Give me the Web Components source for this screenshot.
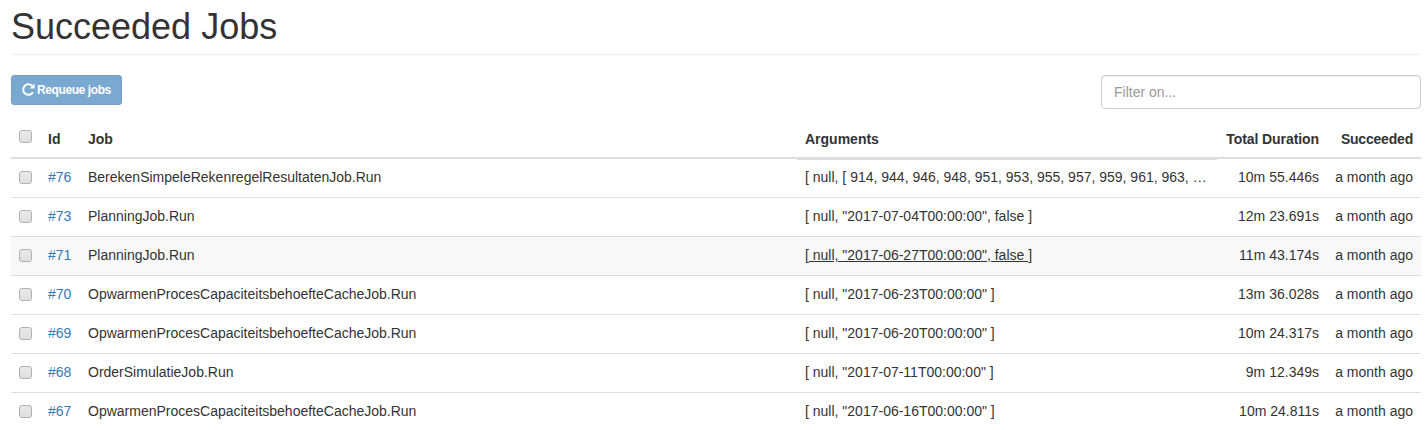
<!DOCTYPE html>
<html>
<head>
<meta charset="utf-8">
<title>Succeeded Jobs</title>
<style>
    html, body { margin: 0; background: #fff; }
    body {
        font-family: "Liberation Sans", Arial, sans-serif;
        font-size: 14px;
        color: #333;
        overflow: hidden;
    }
</style>
</head>
<body>
<jobs-page>
    <page-header>Succeeded Jobs</page-header>
    <jobs-toolbar></jobs-toolbar>
    <jobs-table>
        <job-row job-id="76" job="BerekenSimpeleRekenregelResultatenJob.Run" args="[ null, [ 914, 944, 946, 948, 951, 953, 955, 957, 959, 961, 963, …" duration="10m 55.446s"></job-row>
        <job-row job-id="73" job="PlanningJob.Run" args='[ null, "2017-07-04T00:00:00", false ]' duration="12m 23.691s"></job-row>
        <job-row job-id="71" job="PlanningJob.Run" args='[ null, "2017-06-27T00:00:00", false ]' duration="11m 43.174s" hovered></job-row>
        <job-row job-id="70" job="OpwarmenProcesCapaciteitsbehoefteCacheJob.Run" args='[ null, "2017-06-23T00:00:00" ]' duration="13m 36.028s"></job-row>
        <job-row job-id="69" job="OpwarmenProcesCapaciteitsbehoefteCacheJob.Run" args='[ null, "2017-06-20T00:00:00" ]' duration="10m 24.317s"></job-row>
        <job-row job-id="68" job="OrderSimulatieJob.Run" args='[ null, "2017-07-11T00:00:00" ]' duration="9m 12.349s"></job-row>
        <job-row job-id="67" job="OpwarmenProcesCapaciteitsbehoefteCacheJob.Run" args='[ null, "2017-06-16T00:00:00" ]' duration="10m 24.811s"></job-row>
    </jobs-table>
</jobs-page>

<script>
const COLUMNS = '29px 40px 717px 420px 110px 94px';
const CHECKBOX_CSS = `
    input {
        appearance: none;
        display: block;
        width: 13px;
        height: 13px;
        margin: 0;
        box-sizing: border-box;
        background: linear-gradient(#e9e9e9, #dfdfdf);
        border: 1px solid #b0b0b0;
        border-radius: 3px;
    }
`;

class JobsPage extends HTMLElement {
    constructor() {
        super();
        this.attachShadow({ mode: 'open' });
        this.shadowRoot.innerHTML = `
            <style>
                :host {
                    display: block;
                    padding: 0 6px 0 11px;
                }
            </style>
            <slot></slot>
        `;
    }
}

class PageHeader extends HTMLElement {
    constructor() {
        super();
        this.attachShadow({ mode: 'open' });
        this.shadowRoot.innerHTML = `
            <style>
                :host {
                    display: block;
                    height: 54px;
                    box-sizing: content-box;
                    border-bottom: 1px solid #eee;
                }
                h1 {
                    margin: 0;
                    padding-top: 7px;
                    font-size: 36px;
                    font-weight: 500;
                    line-height: 40px;
                    color: #333;
                }
            </style>
            <h1><slot></slot></h1>
        `;
    }
}

class JobsToolbar extends HTMLElement {
    constructor() {
        super();
        this.attachShadow({ mode: 'open' });
        this.shadowRoot.innerHTML = `
            <style>
                :host {
                    display: flex;
                    justify-content: space-between;
                    align-items: flex-start;
                    padding-top: 20px;
                    height: 45px;
                }
                button {
                    display: flex;
                    align-items: center;
                    gap: 2px;
                    height: 30px;
                    width: 111px;
                    box-sizing: border-box;
                    padding: 0 10px;
                    font: bold 12px "Liberation Sans", Arial, sans-serif;
                    letter-spacing: -.4px;
                    color: #fff;
                    background: #337ab7;
                    border: 1px solid #2e6da4;
                    border-radius: 3px;
                    opacity: .65;
                    white-space: nowrap;
                }
                svg { width: 13px; height: 13px; flex: none; position: relative; top: -1px; }
                input {
                    width: 320px;
                    height: 34px;
                    box-sizing: border-box;
                    padding: 6px 12px;
                    font: 14px "Liberation Sans", Arial, sans-serif;
                    color: #555;
                    border: 1px solid #ccc;
                    border-radius: 4px;
                    box-shadow: inset 0 1px 1px rgba(0,0,0,.075);
                    outline: none;
                }
                input::placeholder { color: #999; opacity: 1; }
            </style>
            <button type="button">
                <svg viewBox="0 0 13 13" fill="none" stroke="#fff" stroke-width="2">
                    <path d="M10.9 9.2A5.2 5.2 0 1 1 10.2 3"></path>
                    <path d="M12.6 .4v5H7.6z" fill="#fff" stroke="none"></path>
                </svg>
                <span>Requeue jobs</span>
            </button>
            <input type="text" placeholder="Filter on...">
        `;
    }
}

class JobsTable extends HTMLElement {
    constructor() {
        super();
        this.attachShadow({ mode: 'open' });
        this.shadowRoot.innerHTML = `
            <style>
                ${CHECKBOX_CSS}
                :host { display: block; }
                .head {
                    display: grid;
                    grid-template-columns: ${COLUMNS};
                    height: 37px;
                    border-bottom: 2px solid #ddd;
                    font-weight: bold;
                    line-height: 20px;
                }
                .head > div { padding: 9px 8px 0; min-width: 0; white-space: nowrap; }
                .head > .check { padding-top: 10px; }
                .args { position: relative; }
                .args::after {
                    content: '';
                    position: absolute;
                    left: 0;
                    right: 0;
                    bottom: -3px;
                    height: 3px;
                    background: #ddd;
                }
                .num { text-align: right; }
                .duration { letter-spacing: -.08px; }
                .succeeded { letter-spacing: -.2px; }
            </style>
            <div class="head">
                <div class="check"><input type="checkbox"></div>
                <div>Id</div>
                <div>Job</div>
                <div class="args">Arguments</div>
                <div class="num duration">Total Duration</div>
                <div class="num succeeded">Succeeded</div>
            </div>
            <slot></slot>
        `;
    }
}

class JobRow extends HTMLElement {
    constructor() {
        super();
        this.attachShadow({ mode: 'open' });
    }

    connectedCallback() {
        const id = this.getAttribute('job-id');
        const job = this.getAttribute('job');
        const args = this.getAttribute('args');
        const duration = this.getAttribute('duration');

        this.shadowRoot.innerHTML = `
            <style>
                ${CHECKBOX_CSS}
                :host {
                    display: grid;
                    grid-template-columns: ${COLUMNS};
                    height: 38px;
                    border-bottom: 1px solid #ddd;
                    line-height: 20px;
                    align-items: center;
                    padding-bottom: 0;
                }
                :host([hovered]) { background: #f8f8f8; }
                :host([hovered]) .args { text-decoration: underline; }
                .cell {
                    padding: 0 8px 2px;
                    min-width: 0;
                    white-space: nowrap;
                    overflow: hidden;
                }
                .num { text-align: right; }
                a { color: #337ab7; text-decoration: none; }
            </style>
            <div class="cell"><input type="checkbox"></div>
            <div class="cell"><a href="#">#${id}</a></div>
            <div class="cell">${job}</div>
            <div class="cell args">${args}</div>
            <div class="cell num">${duration}</div>
            <div class="cell num">a month ago</div>
        `;
    }
}

customElements.define('jobs-page', JobsPage);
customElements.define('page-header', PageHeader);
customElements.define('jobs-toolbar', JobsToolbar);
customElements.define('jobs-table', JobsTable);
customElements.define('job-row', JobRow);
</script>
</body>
</html>
